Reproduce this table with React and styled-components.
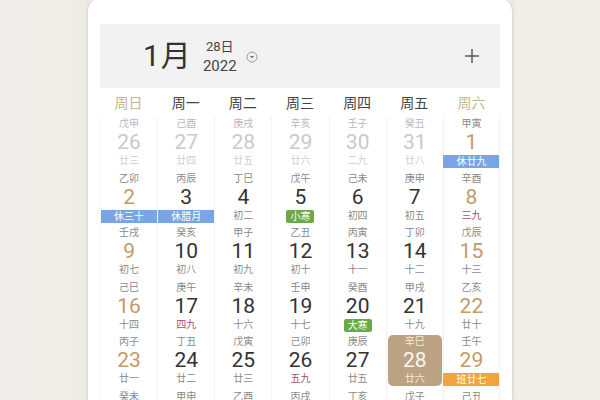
import styled, { createGlobalStyle } from 'styled-components';

const GlobalStyle = createGlobalStyle`
  html, body {
    margin: 0;
    padding: 0;
    background: #f0ede7;
    font-family: Roboto, "Noto Sans CJK SC", sans-serif;
  }
`;

const WEEKDAYS = ['周日', '周一', '周二', '周三', '周四', '周五', '周六'];

// [day, ganzhi, sub, flags]
const DAYS = [
  [26, '戊申', '廿三', { prev: true }],
  [27, '己酉', '廿四', { prev: true }],
  [28, '庚戌', '廿五', { prev: true }],
  [29, '辛亥', '廿六', { prev: true }],
  [30, '壬子', '二九', { prev: true }],
  [31, '癸丑', '廿八', { prev: true }],
  [1, '甲寅', '休廿九', { badge: 'rest' }],
  [2, '乙卯', '休三十', { badge: 'rest' }],
  [3, '丙辰', '休腊月', { badge: 'rest' }],
  [4, '丁巳', '初二'],
  [5, '戊午', '小寒', { badge: 'term' }],
  [6, '己未', '初四'],
  [7, '庚申', '初五'],
  [8, '辛酉', '三九', { nine: true }],
  [9, '壬戌', '初七'],
  [10, '癸亥', '初八'],
  [11, '甲子', '初九'],
  [12, '乙丑', '初十'],
  [13, '丙寅', '十一'],
  [14, '丁卯', '十二'],
  [15, '戊辰', '十三'],
  [16, '己巳', '十四'],
  [17, '庚午', '四九', { nine: true }],
  [18, '辛未', '十六'],
  [19, '壬申', '十七'],
  [20, '癸酉', '大寒', { badge: 'term' }],
  [21, '甲戌', '十九'],
  [22, '乙亥', '廿十'],
  [23, '丙子', '廿一'],
  [24, '丁丑', '廿二'],
  [25, '戊寅', '廿三'],
  [26, '己卯', '五九', { nine: true }],
  [27, '庚辰', '廿五'],
  [28, '辛巳', '廿六', { selected: true }],
  [29, '壬午', '班廿七', { badge: 'work' }],
  [30, '癸未', '廿八'],
  [31, '甲申', '廿九'],
  [1, '乙酉', '春节'],
  [2, '丙戌', '初二'],
  [3, '丁亥', '初三'],
  [4, '戊子', '立春'],
  [5, '己丑', '初五'],
];

function DropIcon() {
  return (
    <svg width="12" height="12" viewBox="0 0 12 12">
      <circle cx="6" cy="6" r="5" fill="none" stroke="#9a9a9a" strokeWidth="1" />
      <path d="M3.8 4.9 L8.2 4.9 L6 7.6 Z" fill="#7a7a7a" />
    </svg>
  );
}

function PlusIcon() {
  return (
    <svg width="16" height="16" viewBox="0 0 16 16">
      <path d="M8 1 V15 M1 8 H15" stroke="#555" strokeWidth="1.4" />
    </svg>
  );
}

function App() {
  return (
    <>
      <GlobalStyle />
      <Page>
        <Card>
          <Header>
            <Month>1月</Month>
            <DateStack>
              <small>28日</small>
              <span>2022</span>
            </DateStack>
            <DropBtn>
              <DropIcon />
            </DropBtn>
            <AddBtn>
              <PlusIcon />
            </AddBtn>
          </Header>
          <Grid>
            {WEEKDAYS.map((w, i) => (
              <WeekLabel key={w} $weekend={i === 0 || i === 6}>
                {w}
              </WeekLabel>
            ))}
            {DAYS.map(([day, gz, sub, flags = {}], i) => {
              const weekend = i % 7 === 0 || i % 7 === 6;
              return (
                <Cell key={i}>
                  <DayBox $selected={flags.selected}>
                    <GanZhi $prev={flags.prev} $selected={flags.selected}>
                      {gz}
                    </GanZhi>
                    <DayNum $prev={flags.prev} $weekend={weekend} $selected={flags.selected}>
                      {day}
                    </DayNum>
                    {flags.badge ? (
                      <Badge $kind={flags.badge}>{sub}</Badge>
                    ) : (
                      <Sub $prev={flags.prev} $nine={flags.nine} $selected={flags.selected}>
                        {sub}
                      </Sub>
                    )}
                  </DayBox>
                </Cell>
              );
            })}
          </Grid>
        </Card>
      </Page>
    </>
  );
}

export default App;

const Page = styled.div`
  width: 600px;
  height: 400px;
  overflow: hidden;
  display: flex;
  justify-content: center;
  background: linear-gradient(90deg, #f1eee9 0%, #efece6 14%, #e9e6e0 14.6%, #f0ede7 15%, #f0ede7 85%, #e8e5df 85.4%, #f1eee8 86%);
`;

const Card = styled.div`
  width: 424px;
  margin-top: -2px;
  padding: 26px 12px 0;
  box-sizing: border-box;
  background: #ffffff;
  border-radius: 14px 14px 0 0;
  box-shadow: 0 0 3px rgba(0, 0, 0, 0.12);
`;

const Header = styled.div`
  height: 64px;
  background: #f2f2f2;
  display: flex;
  align-items: center;
  padding: 0 20px 0 43px;
`;

const Month = styled.div`
  font-size: 30px;
  color: #333;
  line-height: 1;
  letter-spacing: 1px;
`;

const DateStack = styled.div`
  margin-left: 11px;
  display: flex;
  flex-direction: column;
  align-items: center;
  color: #444;
  line-height: 1;
  gap: 6px;
  margin-top: 2px;

  small {
    font-size: 13px;
  }
  span {
    font-size: 15px;
  }
`;

const DropBtn = styled.div`
  margin-left: 9px;
  display: flex;
  margin-top: 2px;
`;

const AddBtn = styled.div`
  margin-left: auto;
  display: flex;
`;

const Grid = styled.div`
  display: grid;
  grid-template-columns: repeat(7, 1fr);
  grid-template-rows: 28px;
  grid-auto-rows: 54.5px;
`;

const WeekLabel = styled.div`
  display: flex;
  align-items: center;
  justify-content: center;
  font-size: 14px;
  color: ${(p) => (p.$weekend ? '#c9b594' : '#444')};
`;

const Cell = styled.div`
  border-left: 1px solid #f3f3f3;
  &:nth-child(7n + 1) {
    border-left: 1px solid #f6f6f6;
  }
  &:nth-child(7n) {
    border-right: 1px solid #f3f3f3;
  }
  display: flex;
  justify-content: center;
  padding: 1px 0;
  box-sizing: border-box;
`;

const DayBox = styled.div`
  width: 100%;
  display: flex;
  flex-direction: column;
  align-items: center;
  padding-top: 1px;
  border-radius: 5px;
  ${(p) => p.$selected && `background: #bba283; margin: 0 1px 2px; width: calc(100% - 2px);`}
`;

const GanZhi = styled.div`
  font-size: 10px;
  line-height: 12px;
  color: ${(p) => (p.$selected ? '#f4ead9' : p.$prev ? '#b9b9b9' : '#8a8a8a')};
`;

const DayNum = styled.div`
  font-size: 21px;
  line-height: 24px;
  color: ${(p) =>
    p.$selected ? '#fbf6ee' : p.$prev ? '#cacaca' : p.$weekend ? '#c39a68' : '#333'};
`;

const Sub = styled.div`
  font-size: 10px;
  line-height: 14px;
  color: ${(p) =>
    p.$selected
      ? '#f4ead9'
      : p.$prev
      ? '#cfcfcf'
      : p.$nine
      ? '#a8505f'
      : '#8a8a8a'};
`;

const BADGE_COLORS = {
  rest: '#78a5e6',
  term: '#6aaa46',
  work: '#f0a33f',
};

const Badge = styled.div`
  margin-top: 1px;
  height: 13px;
  line-height: 13px;
  font-size: 10px;
  color: #fff;
  text-align: center;
  background: ${(p) => BADGE_COLORS[p.$kind]};
  width: ${(p) => (p.$kind === 'term' ? '28px' : 'calc(100% + 1px)')};
  border-radius: ${(p) => (p.$kind === 'term' ? '2px' : '0')};
`;
